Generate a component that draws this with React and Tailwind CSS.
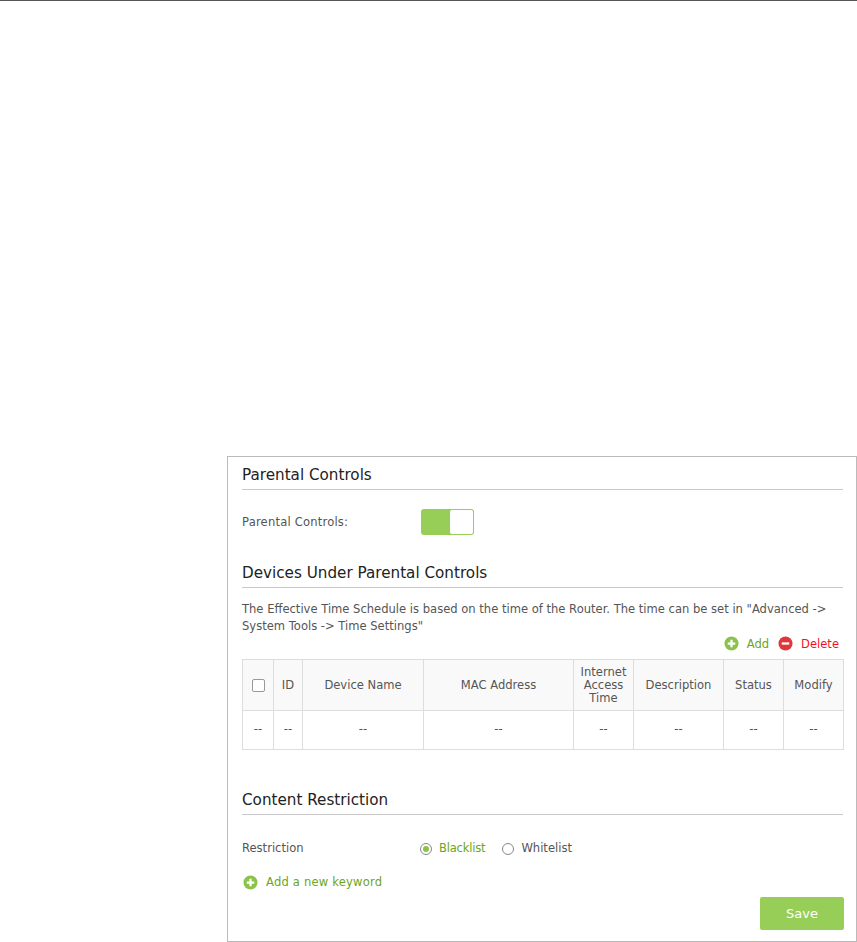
import React from 'react';

const columns = [
  { label: null, width: 'w-[31px]' },
  { label: 'ID', width: 'w-[29px]' },
  { label: 'Device Name', width: 'w-[121px]' },
  { label: 'MAC Address', width: 'w-[150px]' },
  { label: 'Internet Access Time', width: 'w-[60px]' },
  { label: 'Description', width: 'w-[90px]' },
  { label: 'Status', width: 'w-[60px]' },
  { label: 'Modify', width: 'w-[60px]' },
];

function PlusIcon({ className }) {
  return (
    <svg viewBox="0 0 16 16" className={className}>
      <circle cx="8" cy="8" r="7.5" fill="#8bc34a" />
      <path d="M8 4v8M4 8h8" stroke="#fff" strokeWidth="2.4" />
    </svg>
  );
}

function MinusIcon({ className }) {
  return (
    <svg viewBox="0 0 16 16" className={className}>
      <circle cx="8" cy="8" r="7.5" fill="#e0363c" />
      <path d="M4 8h8" stroke="#fff" strokeWidth="2.4" />
    </svg>
  );
}

function SectionTitle({ children }) {
  return (
    <div className="h-[29px] border-b border-[#c8c8c8] text-[15.2px] leading-[28px] text-[#222]">
      {children}
    </div>
  );
}

export default function App() {
  return (
    <div className="h-[942px] w-[857px] overflow-hidden bg-white font-['DejaVu_Sans',sans-serif] text-[11.55px] text-[#555]">
      <div className="h-px bg-[#555]" />
      <div className="ml-[227px] mt-[455px] h-[486px] w-[630px] border border-[#bbb] pl-[14px] pr-[13px] pt-[4px]">
        <SectionTitle>Parental Controls</SectionTitle>

        {/* Switch */}
        <div className="mt-[18px] flex h-[27px] items-center">
          <span className="w-[179px] pt-[3px] tracking-[0.2px]">Parental Controls:</span>
          <div className="flex h-[26px] w-[53px] justify-end rounded-[3px] bg-[#97ce57] p-px">
            <div className="w-[23px] rounded-[2px] bg-white" />
          </div>
        </div>

        <div className="mt-[24px]">
          <SectionTitle>Devices Under Parental Controls</SectionTitle>
        </div>
        <p className="mt-[13px] leading-[17px]">
          The Effective Time Schedule is based on the time of the Router. The time can be set in "Advanced -&gt;
          <br />
          System Tools -&gt; Time Settings"
        </p>

        <div className="mt-[-2px] flex h-[20px] items-center justify-end pr-[4px]">
          <PlusIcon className="h-[15px] w-[15px]" />
          <span className="ml-2 pt-[3px] text-[#6aa61e]">Add</span>
          <MinusIcon className="ml-[9px] h-[15px] w-[15px]" />
          <span className="ml-2 pt-[3px] text-[#f5101e]">Delete</span>
        </div>

        <table className="mt-[6px] w-[601px] table-fixed border-collapse text-center">
          <thead>
            <tr className="h-[51px] bg-[#f9f9f9]">
              {columns.map((col, i) => (
                <th key={i} className={`${col.width} border border-[#ddd] px-0 font-normal leading-[13px]`}>
                  {col.label ?? (
                    <span className="mx-auto block h-[13px] w-[13px] rounded-[2px] border border-[#999] bg-white" />
                  )}
                </th>
              ))}
            </tr>
          </thead>
          <tbody>
            <tr className="h-[39px]">
              {columns.map((col, i) => (
                <td key={i} className="border border-[#ddd]">--</td>
              ))}
            </tr>
          </tbody>
        </table>

        <div className="mt-[36px]">
          <SectionTitle>Content Restriction</SectionTitle>
        </div>

        <div className="mt-[25px] flex h-[17px] items-center">
          <span className="w-[178px]">Restriction</span>
          <span className="flex h-[12px] w-[12px] items-center justify-center rounded-full border border-[#888]">
            <span className="h-[6px] w-[6px] rounded-full bg-[#8bc34a]" />
          </span>
          <span className="ml-[7px] tracking-[-0.2px] text-[#6aa61e]">Blacklist</span>
          <span className="ml-[17px] h-[12px] w-[12px] rounded-full border border-[#888]" />
          <span className="ml-[7px]">Whitelist</span>
        </div>

        <div className="mt-[17px] flex h-[17px] items-center">
          <PlusIcon className="ml-px h-[15px] w-[15px]" />
          <span className="ml-2 tracking-[0.2px] text-[#6aa61e]">Add a new keyword</span>
        </div>

        <div className="mr-[-1px] mt-[6px] flex justify-end">
          <button className="h-[33px] w-[84px] rounded-[2px] bg-[#97ce57] text-[13px] text-white">Save</button>
        </div>
      </div>
    </div>
  );
}
